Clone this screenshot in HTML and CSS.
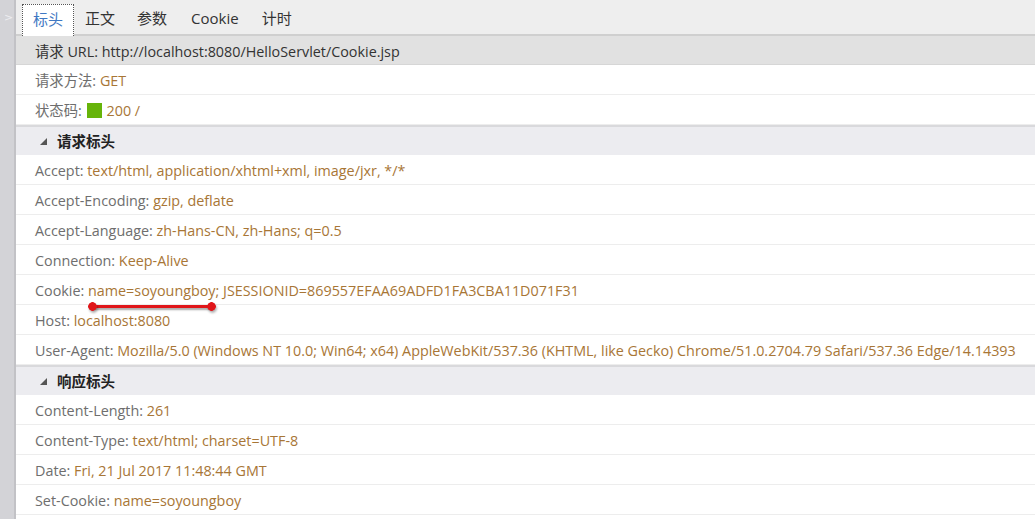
FILE: index.html
```html
<!DOCTYPE html>
<html lang="zh">
<head>
<meta charset="utf-8">
<link rel="stylesheet" href="styles.css">
</head>
<body>
<div class="app">
  <div class="side"><span class="chev">&gt;</span></div>
  <div class="main">
    <div class="tabs">
      <div class="tab active">标头</div>
      <div class="tab">正文</div>
      <div class="tab">参数</div>
      <div class="tab">Cookie</div>
      <div class="tab">计时</div>
    </div>
    <div class="row url"><span class="k">请求 URL: http://localhost:8080/HelloServlet/Cookie.jsp</span></div>
    <div class="row"><span class="k">请求方法: </span><span class="v">GET</span></div>
    <div class="row"><span class="k">状态码: </span><span class="sq"></span><span class="v">200 /</span></div>
    <div class="sec"><span class="tri"></span>请求标头</div>
    <div class="row"><span class="k">Accept: </span><span class="v">text/html, application/xhtml+xml, image/jxr, */*</span></div>
    <div class="row"><span class="k">Accept-Encoding: </span><span class="v">gzip, deflate</span></div>
    <div class="row"><span class="k">Accept-Language: </span><span class="v">zh-Hans-CN, zh-Hans; q=0.5</span></div>
    <div class="row"><span class="k">Connection: </span><span class="v">Keep-Alive</span></div>
    <div class="row mark"><span class="k">Cookie: </span><span class="v"><span class="hl">name=soyoungboy;</span> JSESSIONID=869557EFAA69ADFD1FA3CBA11D071F31</span></div>
    <div class="row"><span class="k">Host: </span><span class="v">localhost:8080</span></div>
    <div class="row"><span class="k">User-Agent: </span><span class="v">Mozilla/5.0 (Windows NT 10.0; Win64; x64) AppleWebKit/537.36 (KHTML, like Gecko) Chrome/51.0.2704.79 Safari/537.36 Edge/14.14393</span></div>
    <div class="sec"><span class="tri"></span>响应标头</div>
    <div class="row"><span class="k">Content-Length: </span><span class="v">261</span></div>
    <div class="row"><span class="k">Content-Type: </span><span class="v">text/html; charset=UTF-8</span></div>
    <div class="row"><span class="k">Date: </span><span class="v">Fri, 21 Jul 2017 11:48:44 GMT</span></div>
    <div class="row"><span class="k">Set-Cookie: </span><span class="v">name=soyoungboy</span></div>
  </div>
</div>
</body>
</html>
```

FILE: styles.css
```css
html, body {
  margin: 0;
  padding: 0;
  background: #ffffff;
  overflow: hidden;
}
.app {
  display: flex;
  width: 1035px;
  height: 519px;
  font-family: "Open Sans", "Noto Sans CJK SC", sans-serif;
  font-size: 14.35px;
  white-space: nowrap;
}
.side {
  width: 14px;
  flex: none;
  background: #d3d3d7;
  border-right: 2px solid #c2c2c6;
}
.chev {
  display: block;
  color: #ededf0;
  font-size: 11px;
  padding: 11px 0 0 4px;
  font-family: "DejaVu Sans", sans-serif;
}
.main {
  flex: 1;
  min-width: 0;
  display: flex;
  flex-direction: column;
}
.tabs {
  height: 36px;
  flex: none;
  background: #eeeeee;
  border-bottom: 2px solid #cfcfcf;
  display: flex;
  align-items: flex-end;
  padding-left: 6px;
  box-sizing: border-box;
}
.tab {
  height: 30px;
  line-height: 28px;
  padding: 0 11px;
  color: #333;
  font-size: 15px;
  box-sizing: border-box;
}
.tab:nth-child(4) { padding: 0 12px 0 13px; }
.tab.active {
  background: #ffffff;
  color: #3f78c2;
  border: 1px dotted #555;
  border-bottom: none;
  padding: 0 10px;
  margin-bottom: -2px;
  height: 32px;
}
.row {
  height: 30px;
  flex: none;
  line-height: 29px;
  padding-left: 19px;
  padding-top: 2px;
  border-bottom: 1px solid #ededed;
  box-sizing: border-box;
  display: flex;
  align-items: center;
}
.row.url {
  height: 29px;
  background: #e1e1e1;
  border-bottom: 1px solid #d6d6d6;
}
.row.url .k { color: #333; }
.k { color: #6e6e6e; white-space: pre; }
.v { color: #a87636; white-space: pre; }
.sq {
  display: inline-block;
  width: 15px;
  height: 15px;
  background: #66b40a;
  margin: 0 5px 0 1px;
}
.sec {
  height: 30px;
  flex: none;
  line-height: 28px;
  background: #ececf0;
  border-top: 2px solid #d9d9dc;
  box-sizing: border-box;
  padding-left: 24px;
  padding-top: 1px;
  color: #222;
  font-weight: bold;
  font-size: 14.5px;
  display: flex;
  align-items: center;
}
.tri {
  width: 0;
  height: 0;
  border-left: 7px solid transparent;
  border-bottom: 7px solid #555;
  margin-right: 10px;
}
.hl {
  position: relative;
}
.hl::after {
  content: "";
  position: absolute;
  left: 3px;
  right: 7px;
  top: 24px;
  height: 3px;
  z-index: 2;
  background: #e0161a;
  border-radius: 2px;
  box-shadow: 1px 2px 2px rgba(0,0,0,0.35);
}
.hl::before {
  content: "";
  position: absolute;
  left: 0;
  right: 3px;
  top: 21px;
  height: 9px;
  z-index: 3;
  background:
    radial-gradient(circle at 4.5px 4.5px, #e0161a 4px, transparent 4.6px) left / 9px 9px no-repeat,
    radial-gradient(circle at 4.5px 4.5px, #e0161a 4px, transparent 4.6px) right / 9px 9px no-repeat;
  filter: drop-shadow(1px 2px 1px rgba(0,0,0,0.3));
}
```
